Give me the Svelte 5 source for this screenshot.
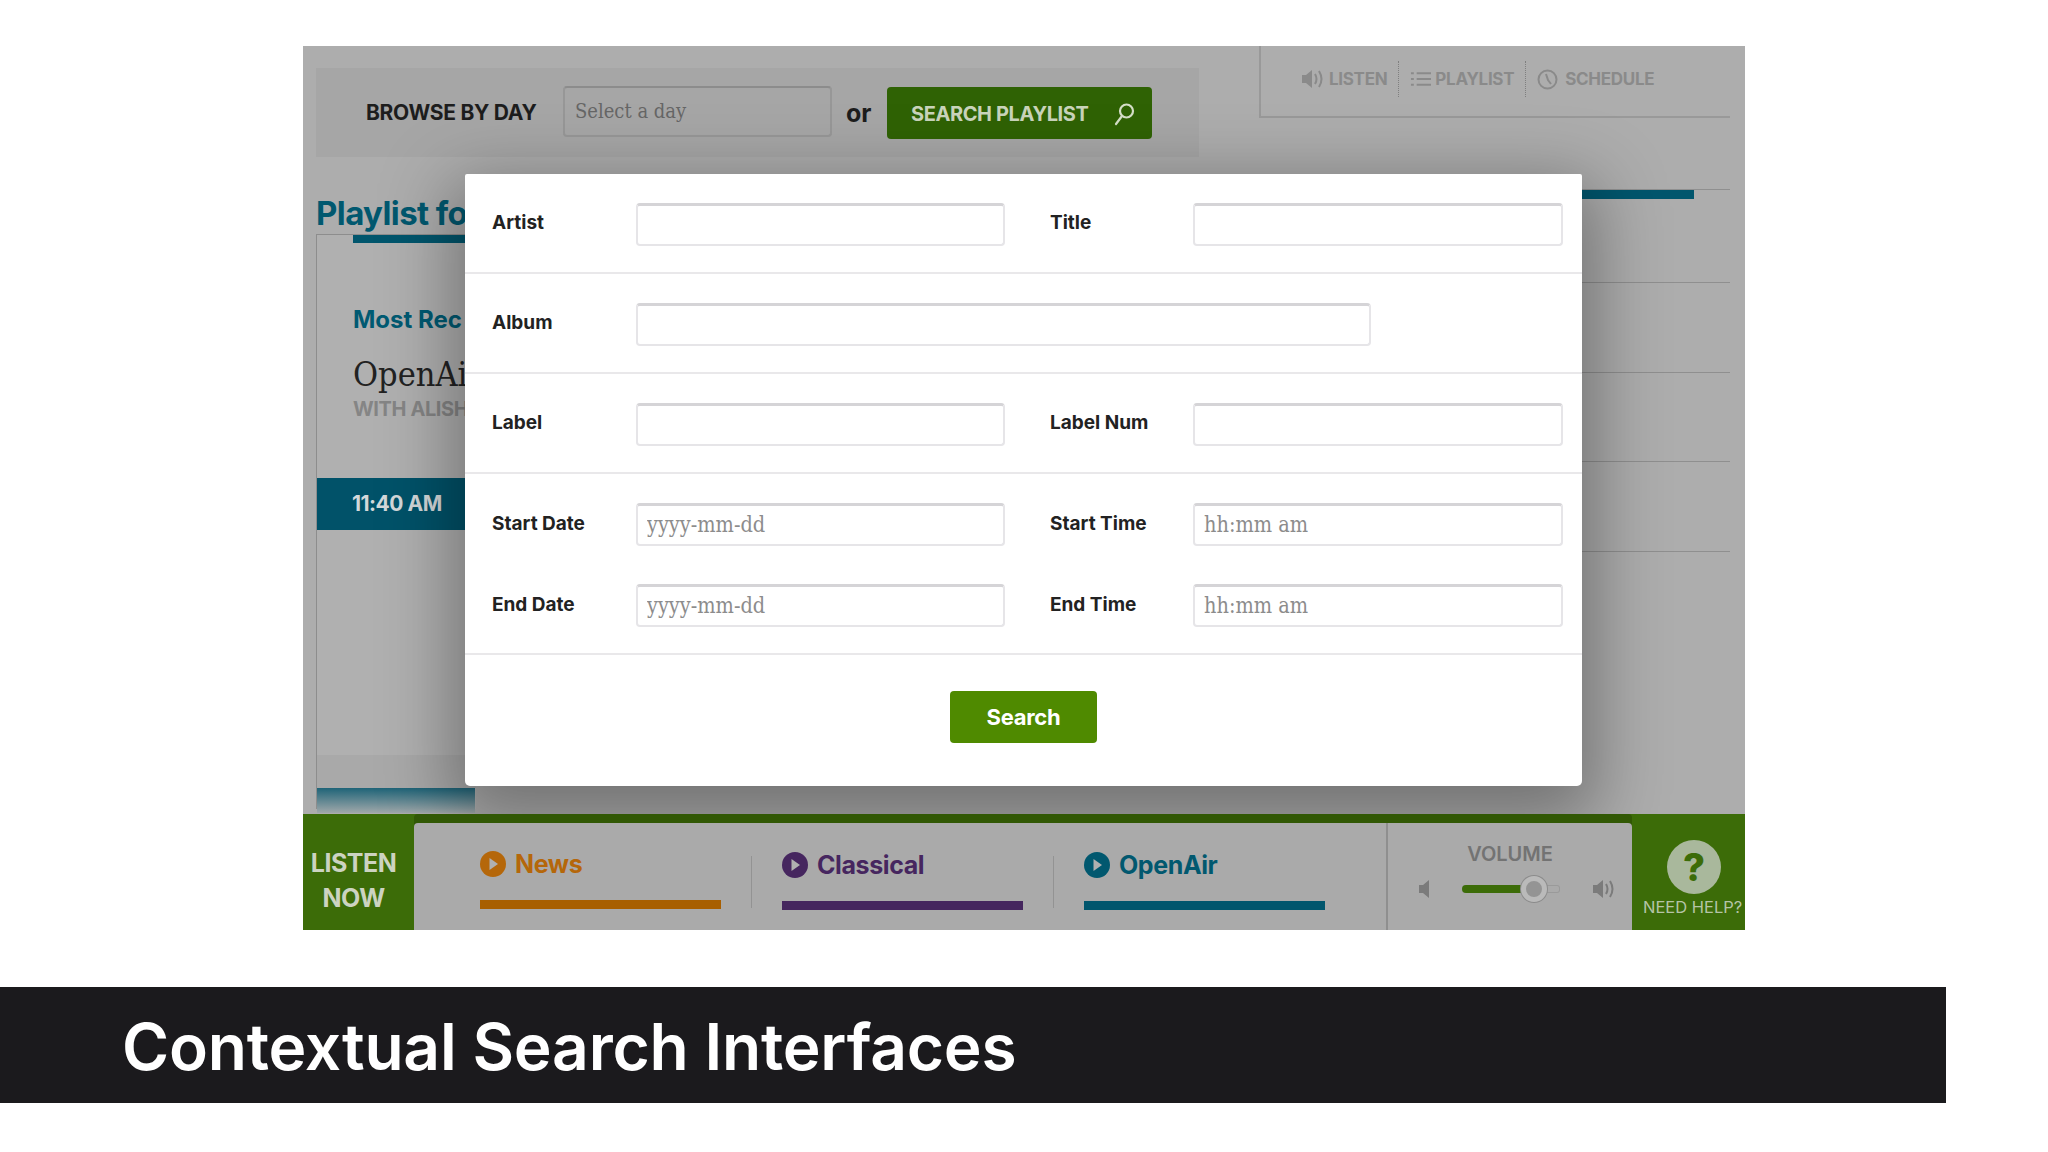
<script>
    let channels = [
        {name: "News", color: "#b5670a", bar: "#a85f00", shift: ""},
        {name: "Classical", color: "#46265f", bar: "#45265e", shift: "low"},
        {name: "OpenAir", color: "#01586f", bar: "#01566d", shift: "low"}
    ];
    let rightRows = [1, 2, 3, 4];
</script>

<div class="page">
    <div class="stage">
        <div class="content">
            <div class="top">
                <div class="browse">
                    <span class="browse-label">BROWSE BY DAY</span>
                    <div class="day-select">Select a day</div>
                    <span class="or">or</span>
                    <div class="search-playlist">
                        <span>SEARCH PLAYLIST</span>
                        <svg width="24" height="24" viewBox="0 0 24 24" fill="none" stroke="#d5dfc8" stroke-width="2.2">
                            <circle cx="14.5" cy="9" r="6.5"/>
                            <path d="M10 14 L4 22" stroke-linecap="round"/>
                        </svg>
                    </div>
                </div>
                <div class="tabs">
                    <div class="tab">
                        <svg width="24" height="20" viewBox="0 0 24 20" fill="#8a8a8a">
                            <path d="M1 6h4l6-5v18l-6-5H1z"/>
                            <path d="M14 5q3 5 0 10M18 2q5 8 0 16" fill="none" stroke="#8a8a8a" stroke-width="2"/>
                        </svg>
                        <span>LISTEN</span>
                    </div>
                    <div class="tab">
                        <svg width="21" height="18" viewBox="0 0 22 18" fill="none" stroke="#8a8a8a" stroke-width="2">
                            <path d="M7 3h15M7 9h15M7 15h15M1 3h3M1 9h3M1 15h3"/>
                        </svg>
                        <span>PLAYLIST</span>
                    </div>
                    <div class="tab">
                        <svg width="21" height="21" viewBox="0 0 21 21" fill="none" stroke="#8a8a8a" stroke-width="2">
                            <circle cx="10.5" cy="10.5" r="9"/>
                            <path d="M9 5l2 6 3 4"/>
                        </svg>
                        <span>SCHEDULE</span>
                    </div>
                </div>
            </div>

            <div class="main">
                <div class="left">
                    <h2>Playlist fo</h2>
                    <div class="left-box">
                        <div class="left-bar"></div>
                        <div class="recent">Most Rec</div>
                        <div class="show">OpenAi</div>
                        <div class="host">WITH ALISH</div>
                        <div class="time">11:40 AM</div>
                        <div class="foot"></div>
                        <div class="next"></div>
                    </div>
                </div>
                <div class="right">
                    <div class="right-bar"></div>
                    {#each rightRows as r}
                        <div class="right-row"></div>
                    {/each}
                </div>
            </div>

            <div class="modal">
                <div class="row">
                    <label for="artist">Artist</label>
                    <input id="artist" />
                    <label class="second" for="title">Title</label>
                    <input id="title" />
                </div>
                <div class="row">
                    <label for="album">Album</label>
                    <input id="album" class="wide" />
                </div>
                <div class="row">
                    <label for="lab">Label</label>
                    <input id="lab" />
                    <label class="second" for="labnum">Label Num</label>
                    <input id="labnum" />
                </div>
                <div class="row dates">
                    <label for="sd">Start Date</label>
                    <input id="sd" placeholder="yyyy-mm-dd" />
                    <label class="second" for="st">Start Time</label>
                    <input id="st" placeholder="hh:mm am" />
                    <label for="ed">End Date</label>
                    <input id="ed" placeholder="yyyy-mm-dd" />
                    <label class="second" for="et">End Time</label>
                    <input id="et" placeholder="hh:mm am" />
                </div>
                <div class="footer">
                    <button>Search</button>
                </div>
            </div>
        </div>

        <div class="player">
            <div class="listen-now">LISTEN<br />NOW</div>
            <div class="panel">
                <div class="channels">
                    {#each channels as c, i}
                        {#if i > 0}<div class="sep"></div>{/if}
                        <div class="channel {c.shift}">
                            <div class="channel-name" style="color: {c.color}">
                                <svg width="26" height="26" viewBox="0 0 26 26">
                                    <circle cx="13" cy="13" r="13" fill={c.color}/>
                                    <path d="M9.5 7 L18 13 L9.5 19 Z" fill="#b0b0b0"/>
                                </svg>
                                {c.name}
                            </div>
                            <div class="channel-bar" style="background: {c.bar}"></div>
                        </div>
                    {/each}
                </div>
                <div class="volume">
                    <div class="volume-label">VOLUME</div>
                    <div class="volume-controls">
                        <svg width="11" height="20" viewBox="0 0 11 20" fill="#7b7b7b">
                            <path d="M0 6h4l6-5v18l-6-5H0z"/>
                        </svg>
                        <div class="slider">
                            <div class="slider-fill"></div>
                            <div class="thumb"></div>
                        </div>
                        <svg width="24" height="22" viewBox="0 0 24 22" fill="#7b7b7b">
                            <path d="M1 7h4l6-5v18l-6-5H1z"/>
                            <path d="M14 6q3 5 0 10M18 3q5 8 0 16" fill="none" stroke="#7b7b7b" stroke-width="2"/>
                        </svg>
                    </div>
                </div>
            </div>
            <div class="help">
                <div class="help-circle">?</div>
                <div class="help-text">NEED HELP?</div>
            </div>
        </div>
    </div>

    <div class="caption">
        <h1>Contextual Search Interfaces</h1>
    </div>
</div>

<style>
    :global(body) {
        margin: 0;
        background: #fff;
    }
    .page {
        width: 2048px;
        height: 1152px;
        padding-top: 46px;
        box-sizing: border-box;
        overflow: hidden;
        font-family: "Inter", "Liberation Sans", sans-serif;
    }
    .stage {
        width: 1442px;
        margin-left: 303px;
        display: flex;
        flex-direction: column;
    }
    .content {
        position: relative;
        height: 768px;
        overflow: hidden;
        background: #adadad;
    }

    /* top bar */
    .top {
        display: flex;
        height: 111px;
    }
    .browse {
        width: 883px;
        height: 89px;
        margin: 22px 0 0 13px;
        box-sizing: border-box;
        padding-left: 50px;
        display: flex;
        align-items: center;
        background: #a6a6a6;
    }
    .browse-label {
        width: 197px;
        font-size: 21px;
        font-weight: 700;
        letter-spacing: -0.3px;
        color: #1d1d1d;
        white-space: nowrap;
    }
    .day-select {
        width: 269px;
        height: 51px;
        margin-top: -3px;
        box-sizing: border-box;
        padding-left: 10px;
        line-height: 47px;
        border: 2px solid #979797;
        border-top-color: #8c8c8c;
        border-radius: 4px;
        font-family: "DejaVu Serif Condensed", "DejaVu Serif", serif;
        font-size: 20px;
        color: #666;
    }
    .or {
        width: 55px;
        padding-left: 14px;
        box-sizing: border-box;
        font-size: 25px;
        font-weight: 700;
        color: #1d1d1d;
    }
    .search-playlist {
        width: 265px;
        height: 52px;
        box-sizing: border-box;
        padding: 2px 16px 0 24px;
        display: flex;
        align-items: center;
        justify-content: space-between;
        background: #2f6204;
        border-radius: 4px;
        color: #c9d4bb;
        font-size: 20px;
        font-weight: 700;
        letter-spacing: -0.4px;
    }
    .tabs {
        width: 471px;
        height: 72px;
        margin-left: 60px;
        box-sizing: border-box;
        padding: 15px 0 0 40px;
        display: flex;
        align-items: flex-start;
        border-left: 2px solid #999;
        border-bottom: 2px solid #999;
    }
    .tab {
        display: flex;
        align-items: center;
        gap: 4px;
        height: 36px;
        color: #8a8a8a;
        font-size: 17px;
        font-weight: 700;
        letter-spacing: -0.3px;
        padding: 0 11px;
        border-right: 1px dotted #7f7f7f;
    }
    .tab:first-child {
        padding-left: 0;
    }
    .tab:last-child {
        gap: 7px;
        border-right: 0;
    }

    /* playlist behind the dialog */
    .main {
        display: flex;
        margin: 0 15px 0 13px;
    }
    .left {
        width: 170px;
        flex: none;
    }
    h2 {
        margin: 35px 0 0;
        font-size: 33px;
        line-height: 42px;
        font-weight: 700;
        letter-spacing: -0.6px;
        color: #01586f;
        white-space: nowrap;
    }
    .left-box {
        height: 575px;
        box-sizing: border-box;
        border-left: 1px solid #8d8d8d;
        border-top: 1px solid #8d8d8d;
        margin-right: 10px;
        padding-top: 73px;
        background: #b0b0b0;
    }
    .left-bar {
        height: 8px;
        margin: -73px 0 62px 36px;
        background: #01566d;
    }
    .recent, .show, .host {
        margin-left: 36px;
        white-space: nowrap;
    }
    .recent {
        font-size: 24px;
        line-height: 30px;
        font-weight: 700;
        color: #015a72;
    }
    .show {
        margin-top: 19px;
        font-family: "DejaVu Serif Condensed", "DejaVu Serif", serif;
        font-size: 34px;
        line-height: 40px;
        color: #222;
    }
    .host {
        margin-top: 3px;
        font-size: 20px;
        line-height: 24px;
        font-weight: 700;
        letter-spacing: -0.4px;
        color: #858585;
    }
    .time {
        margin-top: 57px;
        height: 52px;
        padding-left: 35px;
        line-height: 52px;
        background: #015269;
        color: #d4d8da;
        font-size: 21px;
        font-weight: 700;
        letter-spacing: -0.5px;
        white-space: nowrap;
    }
    .foot {
        margin-top: 225px;
        height: 33px;
        background: #a9a9a9;
    }
    .next {
        width: 158px;
        height: 25px;
        background: linear-gradient(#1f6478, #a0a8aa);
    }
    .right {
        flex: 1;
        margin-top: 32px;
        border-top: 1px solid #8f8f8f;
    }
    .right-bar {
        height: 9px;
        width: 1208px;
        background: #01566d;
    }
    .right-row {
        height: 88.6px;
        border-bottom: 1px solid #8f8f8f;
    }
    .right-bar + .right-row {
        height: 83px;
    }

    /* dialog */
    .modal {
        position: absolute;
        left: 162px;
        top: 128px;
        width: 1117px;
        height: 612px;
        background: #fff;
        border-radius: 2px 2px 5px 5px;
        box-shadow: 0 22px 70px 14px rgba(0, 0, 0, 0.34);
    }
    .row {
        display: grid;
        grid-template-columns: 144px 369px 188px 370px;
        align-items: center;
        padding: 29px 0 26px 27px;
        border-bottom: 2px solid #e9e8ea;
    }
    .row.dates {
        row-gap: 38px;
        padding-bottom: 26px;
    }
    label {
        font-size: 19px;
        font-weight: 700;
        color: #222;
        margin-top: -5px;
    }
    .dates label {
        margin-top: -3px;
    }
    label.second {
        padding-left: 45px;
    }
    input {
        width: 100%;
        height: 43px;
        box-sizing: border-box;
        padding: 0 9px 2px;
        border: 2px solid #e6e5e8;
        border-top: 3px solid #d5d4d7;
        border-radius: 4px;
        background: #fff;
        font-family: "DejaVu Serif Condensed", "DejaVu Serif", serif;
        font-size: 21.5px;
    }
    input::placeholder {
        color: #8c8c8c;
    }
    input.wide {
        width: 735px;
    }
    .footer {
        display: flex;
        justify-content: center;
        padding-top: 36px;
    }
    button {
        width: 147px;
        height: 52px;
        border: 0;
        border-radius: 4px;
        background: #4f8a00;
        color: #fff;
        font-family: "Inter", "Liberation Sans", sans-serif;
        font-size: 22px;
        font-weight: 700;
        letter-spacing: -0.3px;
    }

    /* bottom player */
    .player {
        display: flex;
        height: 116px;
        background: #3c6c08;
    }
    .listen-now {
        width: 101px;
        margin: 32px 10px 0 0;
        text-align: center;
        color: #ccd3c1;
        font-size: 25px;
        line-height: 35px;
        font-weight: 700;
        letter-spacing: -0.5px;
    }
    .panel {
        width: 1218px;
        margin-top: 9px;
        display: flex;
        border-radius: 4px 4px 0 0;
        background: #aaa;
        box-shadow: 0 -9px 0 #315804;
    }
    .channels {
        width: 974px;
        box-sizing: border-box;
        padding: 19px 0 0 66px;
        display: flex;
        align-items: flex-start;
        border-right: 2px solid #8f8f8f;
    }
    .channel {
        width: 241px;
    }
    .channel.low {
        padding-top: 1px;
    }
    .channel-name {
        display: flex;
        align-items: center;
        gap: 9px;
        height: 44px;
        font-size: 25px;
        font-weight: 700;
        letter-spacing: -0.4px;
    }
    .channel-bar {
        height: 9px;
        margin-top: 14px;
    }
    .sep {
        width: 1px;
        height: 52px;
        margin: 14px 30px 0 30px;
        background: #939393;
    }
    .volume {
        flex: 1;
        text-align: center;
    }
    .volume-label {
        margin-top: 18px;
        font-size: 20px;
        line-height: 26px;
        font-weight: 600;
        color: #737373;
    }
    .volume-controls {
        display: flex;
        align-items: center;
        gap: 32px;
        margin: 11px 0 0 31px;
    }
    .slider {
        position: relative;
        width: 97px;
        height: 6px;
        border: 1px solid #9a9a9a;
        border-left: 0;
        border-radius: 3px;
    }
    .slider-fill {
        width: 68px;
        height: 8px;
        margin-top: -1px;
        border-radius: 4px;
        background: #3c6c08;
    }
    .thumb {
        position: absolute;
        left: 59px;
        top: -10px;
        width: 16px;
        height: 16px;
        border-radius: 50%;
        border: 5px solid #bababa;
        background: #949494;
        box-shadow: 0 0 0 1px #8c8c8c;
    }
    .help {
        flex: 1;
        text-align: center;
        color: #b5c4a6;
    }
    .help-circle {
        width: 54px;
        height: 54px;
        margin: 26px auto 0 35px;
        border-radius: 50%;
        background: #a9b89c;
        color: #3c6c08;
        font-size: 38px;
        line-height: 54px;
        font-weight: 800;
    }
    .help-text {
        margin: 2px 0 0 11px;
        text-align: left;
        font-size: 16.5px;
        line-height: 22px;
        white-space: nowrap;
    }

    /* slide caption */
    .caption {
        width: 1946px;
        height: 116px;
        margin-top: 57px;
        box-sizing: border-box;
        padding: 3px 0 0 122px;
        display: flex;
        align-items: center;
        background: #1b1a1d;
    }
    h1 {
        margin: 0;
        color: #fff;
        font-size: 64px;
        font-weight: 600;
        letter-spacing: -0.2px;
        white-space: nowrap;
    }
</style>
